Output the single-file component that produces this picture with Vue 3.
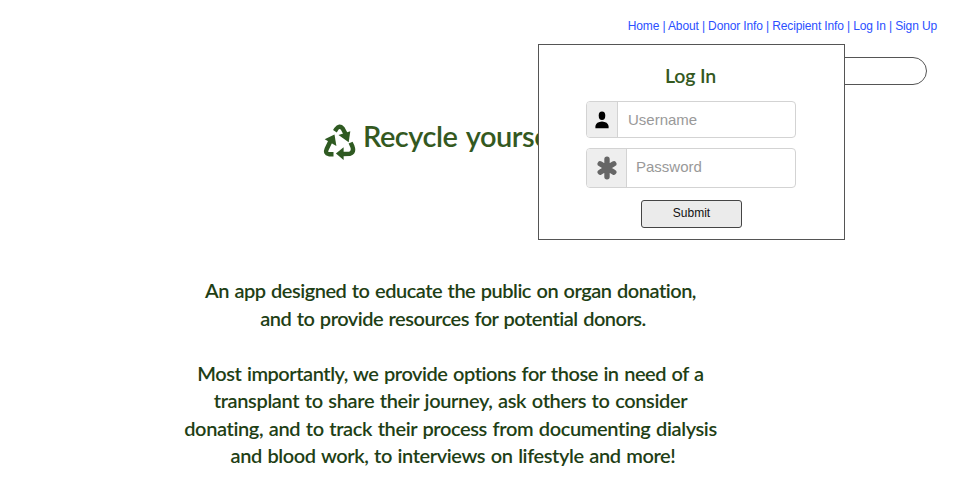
<script setup>
import { ref } from 'vue'

const username = ref('')
const password = ref('')
const links = ['Home', 'About', 'Donor Info', 'Recipient Info', 'Log In', 'Sign Up']
</script>

<template>
  <div class="page">
    <header>
      <nav>
        <template v-for="(link, i) in links" :key="link">
          <span v-if="i"> | </span><a>{{ link }}</a>
        </template>
      </nav>
      <div class="search"></div>
    </header>

    <main>
      <h1>
        <svg class="recycle" viewBox="0 0 32 36">
          <g fill="none" stroke="#2f5a22" stroke-width="4.4" stroke-linejoin="round">
            <path d="M11.4 7.2 12.8 5Q15.8 .8 19.2 4.4L22 9.8" />
            <path d="M10 30.2H5.4Q1.2 29.4 3.2 25L7 17" />
            <path d="M27.1 18.6 28.8 22.2Q31 28 26.5 29.8L19 30" />
          </g>
          <g fill="#2f5a22">
            <path d="M15 11 26.8 7.2 25.2 18.2z" />
            <path d="M1.2 15.2 11 10.6 12.9 22z" />
            <path d="M20.1 23.2V36L12.4 29.6z" />
          </g>
        </svg>
        <span>Recycle yourself</span>
      </h1>
      <p>
        <span class="line l1">An app designed to educate the public on organ donation,</span>
        <span class="line l2">and to provide resources for potential donors.</span>
      </p>
      <p>
        <span class="line l3">Most importantly, we provide options for those in need of a</span>
        <span class="line l4">transplant to share their journey, ask others to consider</span>
        <span class="line l5">donating, and to track their process from documenting dialysis</span>
        <span class="line l6">and blood work, to interviews on lifestyle and more!</span>
      </p>
    </main>

    <form class="dialog" @submit.prevent>
      <h2>Log In</h2>
      <label class="field user">
        <span class="addon">
          <svg width="14" height="18" viewBox="0 0 14 18">
            <ellipse cx="7" cy="4.7" rx="3.3" ry="4.2" />
            <path d="M.4 17.3V15Q1.2 10.9 7 10.5Q12.8 10.9 13.6 15V17.3z" />
          </svg>
        </span>
        <input v-model="username" placeholder="Username" />
      </label>
      <label class="field pass">
        <span class="addon">
          <svg width="20" height="24" viewBox="0 0 20 24">
            <path d="M10 3.2V20.8M3.2 7.8 16.8 16.2M16.8 7.8 3.2 16.2" fill="none" stroke="#666" stroke-width="5.4" stroke-linecap="round" />
          </svg>
        </span>
        <input v-model="password" type="password" placeholder="Password" />
      </label>
      <button>Submit</button>
    </form>
  </div>
</template>

<style>
body {
  background: #fff;
}
</style>

<style scoped>
.page {
  position: relative;
  width: 955px;
  height: 496px;
  overflow: hidden;
  box-sizing: border-box;
  font-family: "Liberation Sans", Arial, sans-serif;
}
header {
  display: flex;
  flex-direction: column;
  align-items: flex-end;
  height: 86px;
  padding-top: 19px;
  box-sizing: border-box;
}
nav {
  margin-right: 18px;
  font-size: 12px;
  line-height: 14px;
  letter-spacing: -0.13px;
  color: #2b50ff;
  white-space: pre-wrap;
}
.search {
  width: 240px;
  height: 28px;
  margin: 24px 28px 0 0;
  box-sizing: border-box;
  border: 1px solid #555;
  border-radius: 14px;
}
main {
  font-family: Lato, "Open Sans", sans-serif;
  font-variant-ligatures: none;
  color: #1f3f16;
}
h1 {
  display: flex;
  gap: 7px;
  height: 50px;
  margin: 30px 0 0 323px;
  font-size: 29px;
  line-height: 39px;
  font-weight: 600;
  letter-spacing: -0.5px;
  word-spacing: 2.5px;
  color: #34591f;
}
.recycle {
  width: 33px;
  height: 36px;
  margin-top: 8px;
}
p {
  width: 901px;
  margin: 111px 0 0;
  font-size: 20px;
  line-height: 27.5px;
  font-weight: 600;
  text-align: center;
  word-spacing: 1px;
}
p + p {
  margin-top: 27.5px;
}
.line {
  display: block;
  white-space: nowrap;
}
.l1 {
  letter-spacing: -0.49px;
}
.l2 {
  letter-spacing: -0.5px;
}
.l3 {
  letter-spacing: -0.46px;
}
.l4 {
  letter-spacing: -0.37px;
}
.l5 {
  letter-spacing: -0.38px;
}
.l6 {
  letter-spacing: -0.4px;
}
.l2,
.l6 {
  padding-left: 5px;
}
.dialog {
  position: absolute;
  left: 538px;
  top: 44px;
  width: 307px;
  height: 196px;
  box-sizing: border-box;
  display: flex;
  flex-direction: column;
  align-items: center;
  border: 1px solid #555;
  background: #fff;
}
h2 {
  margin: 17px 0 0 -2px;
  font: 600 19.5px/28px Lato, "Open Sans", sans-serif;
  letter-spacing: -0.2px;
  color: #34591f;
}
.field {
  display: flex;
  width: 210px;
  margin-right: 1px;
  box-sizing: border-box;
  border: 1px solid #d3d3d3;
  border-radius: 4px;
  overflow: hidden;
}
.user {
  height: 37px;
  margin-top: 11px;
}
.pass {
  height: 40px;
  margin-top: 10px;
}
.addon {
  display: flex;
  align-items: center;
  justify-content: center;
  flex: none;
  width: 30px;
  border-right: 1px solid #d3d3d3;
  background: #eee;
}
.pass .addon {
  width: 39px;
}
input {
  flex: 1;
  min-width: 0;
  padding: 0 10px;
  border: 0;
  outline: 0;
  background: none;
  font: 15px "Liberation Sans", Arial, sans-serif;
}
input::placeholder {
  color: #999;
}
.pass input {
  padding: 0 9px 3px;
}
button {
  width: 101px;
  height: 28px;
  margin-top: 12px;
  padding: 0 0 3px;
  border: 1px solid #444;
  border-radius: 3px;
  background: #ebebeb;
  color: #111;
  font: 12px "Liberation Sans", Arial, sans-serif;
}
</style>
